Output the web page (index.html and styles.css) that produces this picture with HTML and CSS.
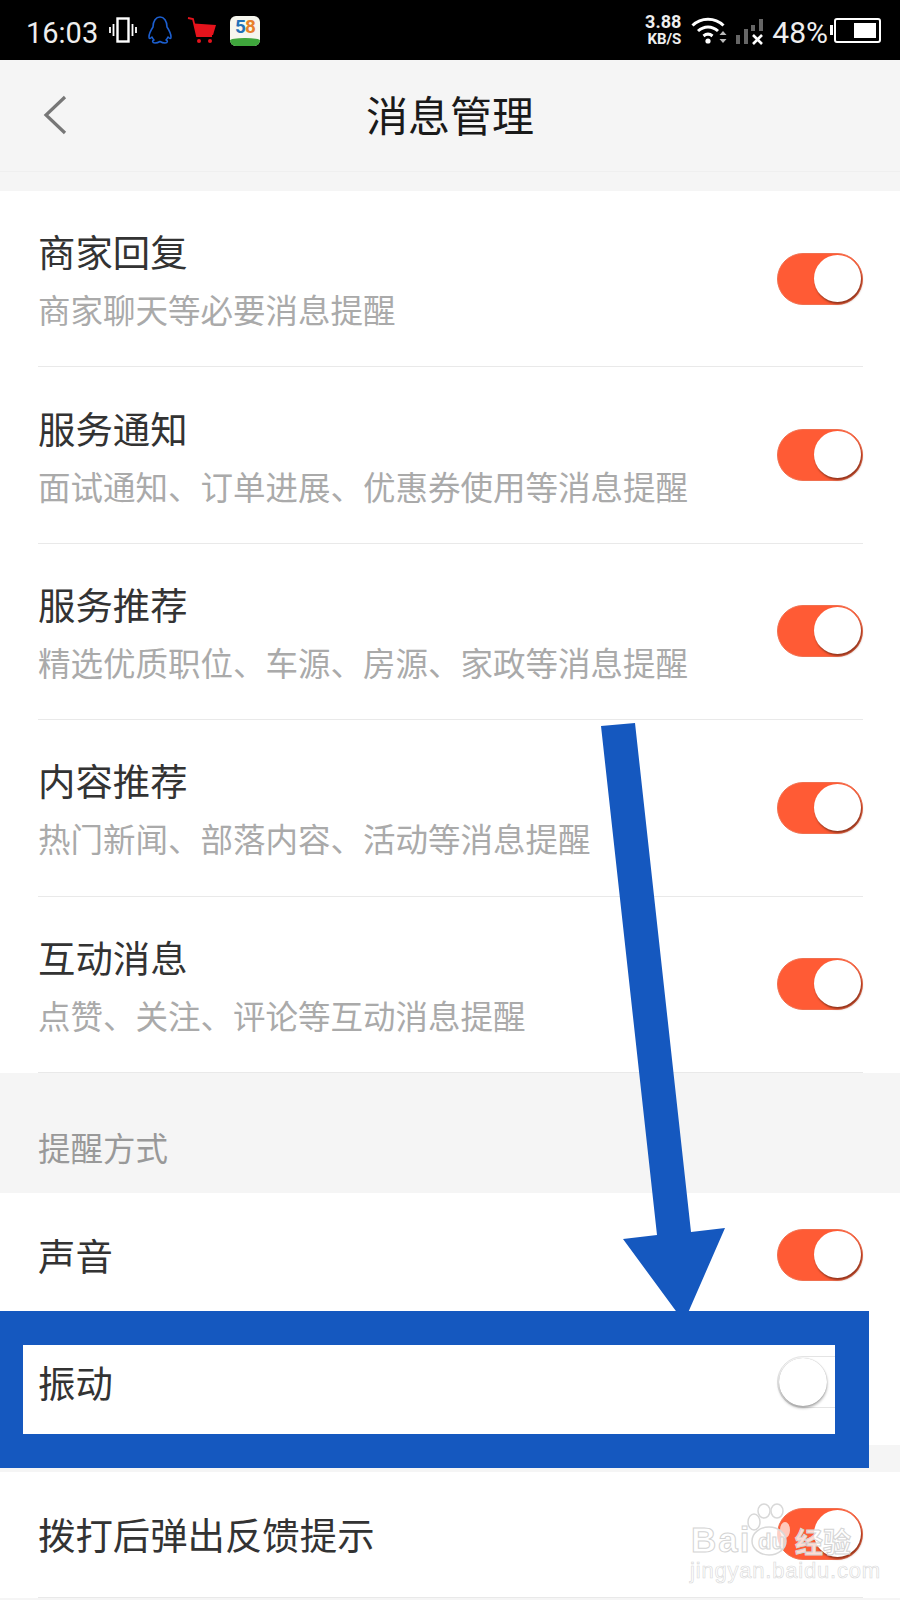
FILE: index.html
```html
<!DOCTYPE html>
<html lang="zh-CN">
<head>
  <meta charset="UTF-8" />
  <meta name="viewport" content="width=device-width, initial-scale=1.0"/>
  <title>消息管理</title>
  <link rel="stylesheet" href="styles.css">
</head>
<body>
  <div class="status-bar">
    <div class="status-left">
      <span class="status-time">16:03</span>
      <svg class="ic-vibrate" width="28" height="26" viewBox="0 0 28 26" fill="none" stroke="#fff">
        <rect x="8.5" y="1.5" width="11" height="23" stroke-width="2.4"/>
        <path d="M4.5 7v12M1 10v6M23.5 7v12M27 10v6" stroke-width="1.8"/>
      </svg>
      <svg class="ic-qq" width="26" height="29" viewBox="0 0 26 29" fill="none" stroke="#1c5fd0" stroke-width="1.6" stroke-linejoin="round">
        <path d="M6 11C6 5 9 1 13 1s7 4 7 10c2 3 4 7 4 10 0 2-1 2-3 0-.4 1-1 2-2 3 2 .6 2 3-1 3-2 0-3.500-.6-5-1.500-1.500.9-3 1.500-5 1.500-3 0-3-2.400-1-3-1-1-1.600-2-2-3-2 2-3 2-3 0 0-3 2-7 4-10z"/>
      </svg>
      <svg class="ic-cart" width="30" height="28" viewBox="0 0 30 28">
        <path d="M1 2l5 1 4 17h15" fill="none" stroke="#e5131c" stroke-width="1.800"/>
        <path d="M7 7.500L29 9l-3 10H10z" fill="#e5131c"/>
        <circle cx="12" cy="25" r="2" fill="#e5131c"/>
        <circle cx="23" cy="25" r="2" fill="#e5131c"/>
      </svg>
      <div class="app-58">
        <span class="app-58-num"><span class="num-five">5</span><span class="num-eight">8</span></span>
        <span class="app-58-grass"></span>
      </div>
    </div>
    <div class="status-right">
      <div class="net-speed"><span class="speed-num">3.88</span><span class="speed-unit">KB/S</span></div>
      <svg class="ic-wifi" width="36" height="28" viewBox="0 0 36 28" fill="none" stroke="#fff" stroke-width="3">
        <path d="M1.500 9.500C10 1 24 1 32.500 9.500M7 15c6-5.500 14-5.500 20 0M12.500 20c3-2.500 6-2.500 9 0"/>
        <circle cx="17" cy="25" r="2.600" fill="#fff" stroke="none"/>
        <path d="M32 15l3.500 4h-7zM32 27l3.500-4h-7z" fill="#bbb" stroke="none"/>
      </svg>
      <svg class="ic-signal" width="28" height="26" viewBox="0 0 28 26">
        <rect x="0" y="16" width="4" height="9" fill="#666"/>
        <rect x="8" y="10" width="4" height="15" fill="#666"/>
        <rect x="15" y="6" width="4" height="6" fill="#666"/>
        <rect x="23" y="0" width="4" height="12" fill="#666"/>
        <path d="M17 16l9 9M26 16l-9 9" stroke="#fff" stroke-width="2.600"/>
      </svg>
      <span class="status-pct">48%</span>
      <div class="battery"><span class="battery-fill"></span></div>
    </div>
  </div>

  <header class="top-bar">
    <svg class="back" width="24" height="40" viewBox="0 0 24 40" fill="none" stroke="#777" stroke-width="3.200">
      <path d="M22 2L3 20l19 18"/>
    </svg>
    <h1>消息管理</h1>
  </header>

  <div class="spacer-top"></div>

  <section>
    <div class="row row-tall"><div class="row-inner">
      <div><div class="row-title">商家回复</div><div class="row-sub">商家聊天等必要消息提醒</div></div>
      <span class="toggle on"></span>
    </div></div>
    <div class="row row-tall"><div class="row-inner">
      <div><div class="row-title">服务通知</div><div class="row-sub">面试通知、订单进展、优惠券使用等消息提醒</div></div>
      <span class="toggle on"></span>
    </div></div>
    <div class="row row-tall"><div class="row-inner">
      <div><div class="row-title">服务推荐</div><div class="row-sub">精选优质职位、车源、房源、家政等消息提醒</div></div>
      <span class="toggle on"></span>
    </div></div>
    <div class="row row-tall"><div class="row-inner">
      <div><div class="row-title">内容推荐</div><div class="row-sub">热门新闻、部落内容、活动等消息提醒</div></div>
      <span class="toggle on"></span>
    </div></div>
    <div class="row row-tall"><div class="row-inner">
      <div><div class="row-title">互动消息</div><div class="row-sub">点赞、关注、评论等互动消息提醒</div></div>
      <span class="toggle on"></span>
    </div></div>
  </section>

  <div class="section-label">提醒方式</div>

  <section>
    <div class="row"><div class="row-inner">
      <div class="row-title">声音</div>
      <span class="toggle on"></span>
    </div></div>
    <div class="row"><div class="row-inner no-line">
      <div class="row-title">振动</div>
      <span class="toggle"></span>
    </div></div>
  </section>

  <div class="spacer-mid"></div>

  <section>
    <div class="row"><div class="row-inner">
      <div class="row-title">拨打后弹出反馈提示</div>
      <span class="toggle on"></span>
    </div></div>
  </section>

  <!-- annotation drawn over the screenshot -->
  <svg class="note-arrow" width="900" height="1600" viewBox="0 0 900 1600">
    <polygon points="601,726 635,723 691,1232 725,1228 684,1322 623,1239 657,1235" fill="#1558bf"/>
  </svg>
  <div class="note-frame"></div>

  <div class="watermark">
    <svg class="paw" width="48" height="56" viewBox="0 0 48 56" fill="rgba(255,255,255,0.7)" stroke="#d8d8d8" stroke-width="1.500">
      <ellipse cx="8" cy="19" rx="6" ry="8"/>
      <ellipse cx="18" cy="8" rx="6" ry="7"/>
      <ellipse cx="31" cy="8" rx="6" ry="7"/>
      <ellipse cx="39" cy="27" rx="5" ry="8" fill="rgba(255,220,210,0.85)" stroke="none"/>
      <ellipse cx="23" cy="38" rx="17" ry="14"/>
    </svg>
    <span class="wm-baidu">Bai</span><span class="wm-du">du</span><span class="wm-jy">经验</span>
    <div class="wm-url">jingyan.baidu.com</div>
  </div>
</body>
</html>
```

FILE: styles.css
```css
* {
  box-sizing: border-box;
}

body {
  margin: 0;
  height: 1600px;
  overflow: hidden;
  position: relative;
  background-color: #f5f5f5;
  font-family: "Noto Sans CJK SC", "Noto Sans", sans-serif;
}

/* status bar */
.status-bar {
  height: 60px;
  background-color: #000;
  color: #fff;
  display: flex;
  justify-content: space-between;
  align-items: center;
  padding: 0 19px 0 26px;
  font-family: Roboto, sans-serif;
}

.status-left,
.status-right {
  display: flex;
  align-items: center;
}

.status-time {
  font-size: 29px;
  color: #eee;
  width: 83px;
  margin-top: 6px;
}

.ic-qq {
  margin-left: 10px;
}

.ic-cart {
  margin-left: 14px;
}

.app-58 {
  margin-left: 13px;
  margin-top: 2px;
  width: 30px;
  height: 30px;
  border-radius: 6px;
  background-color: #f6f6ee;
  display: flex;
  flex-direction: column;
  align-items: center;
}

.app-58-num {
  font-size: 19px;
  font-weight: 700;
  line-height: 22px;
  letter-spacing: -1px;
}

.num-five {
  color: #2271b8;
}

.num-eight {
  color: #e8802a;
}

.app-58-grass {
  width: 100%;
  flex: 1;
  background-color: #3fa63c;
  border-radius: 50% 50% 6px 6px / 30% 30% 6px 6px;
}

.net-speed {
  display: flex;
  flex-direction: column;
  align-items: flex-end;
  font-weight: 700;
  color: #eee;
}

.speed-num {
  font-size: 18px;
  line-height: 18px;
}

.speed-unit {
  font-size: 15px;
  line-height: 16px;
}

.ic-wifi {
  margin-left: 10px;
}

.ic-signal {
  margin-left: 9px;
  margin-top: 4px;
}

.status-pct {
  font-size: 30px;
  color: #eee;
  margin-left: 8px;
  margin-top: 4px;
}

.battery {
  margin-left: 6px;
  width: 47px;
  height: 25px;
  border: 2.500px solid #fff;
  border-radius: 3px;
  padding: 3px;
  display: flex;
  justify-content: flex-end;
  position: relative;
}

.battery::before {
  content: "";
  position: absolute;
  left: -6px;
  top: 5px;
  width: 3px;
  height: 10px;
  background-color: #fff;
}

.battery-fill {
  width: 22px;
  background-color: #fff;
}

/* title bar */
.top-bar {
  height: 112px;
  background-color: #f5f5f5;
  border-bottom: 1px solid #efefef;
  display: grid;
  grid-template-columns: 1fr auto 1fr;
  align-items: center;
  padding: 0 43px;
}

.back {
  margin-top: -2px;
}

.top-bar h1 {
  margin: -3px 0 0 0;
  font-size: 42px;
  font-weight: 400;
  color: #1a1a1a;
  line-height: 112px;
}

.spacer-top {
  height: 19px;
}

.spacer-mid {
  height: 27px;
}

/* rows */
.row {
  background-color: #fff;
  padding: 0 37px 0 38px;
  height: 126px;
}

.row-tall {
  height: 176.400px;
}

.row-inner {
  height: 100%;
  border-bottom: 1px solid #e9e9e9;
  display: flex;
  justify-content: space-between;
  align-items: center;
}

.no-line {
  border-bottom: none;
}

.row-title {
  font-size: 37.400px;
  color: #333;
  line-height: 50px;
}

.row-sub {
  font-size: 32.500px;
  color: #aaa;
  line-height: 44px;
  margin-top: 11px;
}

.section-label {
  height: 120px;
  padding: 52px 38px 0;
  font-size: 32.500px;
  line-height: 44px;
  color: #999;
}

/* switches */
.toggle {
  width: 86px;
  height: 52px;
  border-radius: 26px;
  border: 1px solid #e4e4e4;
  background-color: #fff;
  padding: 1px;
  display: flex;
  flex-shrink: 0;
}

.toggle::after {
  content: "";
  width: 48px;
  height: 48px;
  border-radius: 50%;
  background-color: #fff;
  box-shadow: 0 0 1px rgba(0, 0, 0, 0.3), 0 2px 3px rgba(0, 0, 0, 0.35);
}

.toggle.on {
  background-color: #ff5b35;
  border-color: #f07050;
  justify-content: flex-end;
}

.toggle.on::after {
  width: 47px;
  height: 47px;
  box-shadow: 1px 2px 2px rgba(110, 40, 20, 0.75);
}

/* annotation */
.note-arrow {
  position: absolute;
  left: 0;
  top: 0;
}

.note-frame {
  position: absolute;
  left: 0;
  top: 1311px;
  width: 869px;
  height: 157px;
  border: 34px solid #1558bf;
  border-left-width: 23px;
}

/* watermark */
.watermark {
  position: absolute;
  left: 690px;
  top: 1500px;
  width: 170px;
  height: 90px;
  color: #fff;
}

.paw {
  position: absolute;
  left: 56px;
  top: 3px;
}

.wm-baidu,
.wm-du,
.wm-jy {
  position: absolute;
  font-family: "Liberation Sans", sans-serif;
  font-weight: 700;
  -webkit-text-stroke: 1px #d4d4d4;
  color: rgba(255, 255, 255, 0.8);
}

.wm-baidu {
  left: 1px;
  top: 20px;
  font-size: 35px;
  letter-spacing: 2px;
}

.wm-du {
  left: 68px;
  top: 29px;
  font-size: 22px;
}

.wm-jy {
  left: 105px;
  top: 21px;
  font-family: "Noto Sans CJK SC", sans-serif;
  font-size: 28px;
  line-height: 40px;
  white-space: nowrap;
}

.wm-url {
  position: absolute;
  left: 0;
  top: 59px;
  font-family: "Liberation Sans", sans-serif;
  font-size: 22px;
  line-height: 24px;
  letter-spacing: 0.800px;
  white-space: nowrap;
  color: rgba(255, 255, 255, 0.7);
  -webkit-text-stroke: 0.600px #d8d8d8;
}
```
